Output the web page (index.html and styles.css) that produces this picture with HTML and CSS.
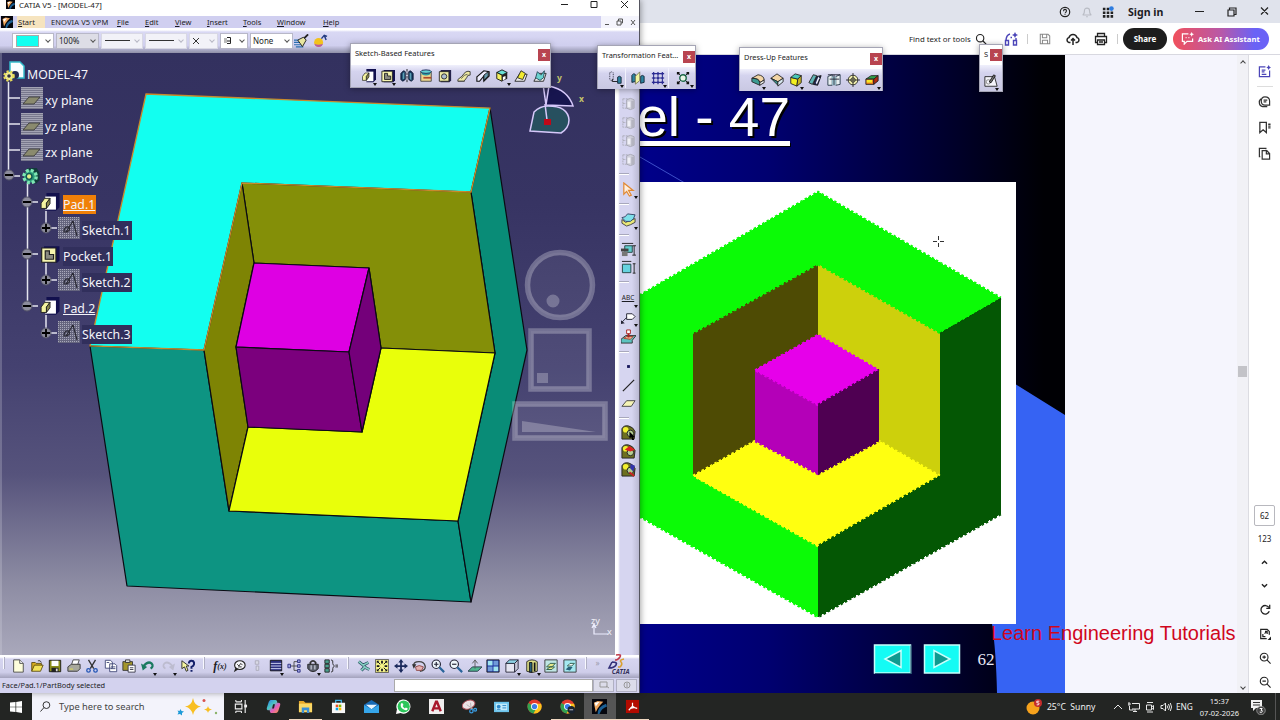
FILE: index.html
```html
<!DOCTYPE html>
<html lang="en">
<head>
    <meta charset="UTF-8">
    <meta name="viewport" content="width=device-width, initial-scale=1.0">
    <title>CATIA V5 - [MODEL-47]</title>
    <link rel="stylesheet" href="styles.css">
</head>
<body>
    <!-- icon set -->
    <svg class="defs" width="0" height="0">
        <defs>
            <linearGradient id="slideBg"><stop offset="0" stop-color="#00008a"/><stop offset=".3" stop-color="#000070"/><stop offset=".75" stop-color="#000028"/><stop offset=".95" stop-color="#000004"/></linearGradient>
            <linearGradient id="cop" x2="1" y2="1"><stop offset="0" stop-color="#2a7bf0"/><stop offset=".4" stop-color="#4cc9c0"/><stop offset=".6" stop-color="#e25bc0"/><stop offset="1" stop-color="#f7a03c"/></linearGradient>
        </defs>
        <symbol id="catia" viewBox="0 0 16 16"><path fill="#05050c" d="M0 0h16v16H0z"/><path fill="#1b5f94" d="M6 16Q6 8 15 5l1 3q-6 2-8 8z"/><path fill="#f0a860" d="M2 4l4-2 6 1-3 3-3 4-2 4-1-5z"/><path fill="#fff" d="M3 4l5-1-4 5z"/></symbol>
        <symbol id="pad" viewBox="0 0 16 16"><path fill="#12104e" d="M5 0h11v12l-3 3H5z"/><path fill="#fff" d="M4 3h9v11H4z"/><path fill="#f4f3a0" stroke="#222" stroke-width=".8" d="M.5 8.500l3-4H8l-3 4V13H.5z"/><path fill="#8a894a" stroke="#222" stroke-width=".8" d="M5 8.500l3-4V9l-3 4z"/></symbol>
        <symbol id="pocket" viewBox="0 0 16 16"><path fill="#12104e" d="M3 1h13v12l-2 2H3z"/><path fill="#f6f5ae" stroke="#222" d="M1 2.500h12v12H1z"/><path fill="#8a8a80" stroke="#222" d="M4 5h3.500v3H11v4H4z"/></symbol>
        <symbol id="shaft" viewBox="0 0 16 16"><path fill="#14385e" stroke="#0a1530" d="M1 5l3-3 2 1v9l-3 2-2-2zM15 5l-3-3-2 1v9l3 2 2-2z"/><path fill="#5ca0b5" d="M3 5l2-2v8l-2 1zM11 4l2 1v8l-2-2z"/><path stroke="#111" d="M8 0v16" stroke-dasharray="3 1"/></symbol>
        <symbol id="groove" viewBox="0 0 16 16"><path fill="#efd68d" stroke="#444" d="M2 3h12v11H2z"/><path fill="#2a9aa0" d="M3 3q5 4 10 0v3q-5 3-10 0z"/><path fill="#b04a2c" d="M5 9h9v2H5z"/><ellipse cx="8" cy="3" rx="6" ry="2" fill="#64d2d2" stroke="#125"/></symbol>
        <symbol id="hole" viewBox="0 0 16 16"><path fill="#25234a" d="M3 1h12v12l-2 2H3z"/><path fill="#eeeca4" stroke="#222" d="M1.500 3h11v11h-11z"/><circle cx="7" cy="8.500" r="3" fill="#aebfd0" stroke="#222"/></symbol>
        <symbol id="rib" viewBox="0 0 16 16"><path fill="#eee9a2" stroke="#333" d="M1 12l5-4q4-7 9-5v4q-3-1-4 3l-3 4H1z"/><path fill="none" stroke="#555" d="M5 11q3-5 7-5M1 14h8"/></symbol>
        <symbol id="slot" viewBox="0 0 16 16"><path fill="#eef" stroke="#111" stroke-width="1.300" d="M1 9l8-7 6 1v5l-6 6V8L4 14H1z"/><path fill="#69a" stroke="#111" d="M9 7l5-4v5l-5 5z"/></symbol>
        <symbol id="stiff" viewBox="0 0 16 16"><path fill="#69e0d5" stroke="#111" d="M2 4l6-3 6 3-6 3z"/><path fill="#f4f060" stroke="#111" d="M2 4l6 3v7l-6-3z"/><path fill="#222" d="M14 4v7l-6 3V7z"/><path fill="#fff" d="M9 9l3-1v3l-3 2z"/></symbol>
        <symbol id="loft" viewBox="0 0 16 16"><path fill="#eee" stroke="#222" d="M1 14l5-8h9l-3 8z"/><path fill="#f2ea30" stroke="#222" d="M4 10l4-8 5 3-3 7z"/></symbol>
        <symbol id="loft2" viewBox="0 0 16 16"><path fill="#eee" stroke="#222" d="M1 14l5-9h9l-3 9z"/><path fill="#6bd3d0" stroke="#245" d="M3 10l2-7 4 4 4-5-1 8-4 3z"/></symbol>
        <symbol id="trans" viewBox="0 0 16 16"><path fill="none" stroke="#223" stroke-dasharray="1 1" d="M2 2l2-1 2 1v8l-2 1-2-1z"/><path fill="none" stroke="#111" d="M5 12h6M5 12V9"/><path fill="#2d83a0" stroke="#123" d="M11 7l2-1 2 1v7h-4z"/></symbol>
        <symbol id="mirror" viewBox="0 0 16 16"><path fill="#2d83a0" stroke="#123" d="M1 5l2-2 2 1v8l-4 1zM11 6l2-1 2 1v7l-4 1z"/><path fill="#f0f5a0" stroke="#775" d="M5 6l5-5v10l-5 4z"/></symbol>
        <symbol id="pattern" viewBox="0 0 16 16"><path stroke="#2b2b92" stroke-width="1.200" d="M1 3h14M1 8h14M1 13h14M3 1v14M8 1v14M13 1v14"/><path fill="#2b2b92" d="M2 2h2v2H2zM7 2h2v2H7zM12 2h2v2h-2zM2 7h2v2H2zM7 7h2v2H7zM12 7h2v2h-2zM2 12h2v2H2zM7 12h2v2H7zM12 12h2v2h-2z"/></symbol>
        <symbol id="scale" viewBox="0 0 16 16"><circle cx="8" cy="8" r="3.700" fill="#eaf4e6" stroke="#1c6a4a" stroke-width="1.600"/><path fill="#111" d="M1 1h3v3H1zM12 1h3v3h-3zM1 12h3v3H1zM12 12h3v3h-3z"/><path stroke="#111" d="M3 3l2 2M13 3l-2 2M3 13l2-2M13 13l-2-2"/></symbol>
        <symbol id="fillet" viewBox="0 0 16 16"><path fill="#f2d5a6" stroke="#222" d="M1 6l7-4q7 1 7 6l-5 3q0-5-9-5z"/><path fill="#3c9b92" stroke="#222" d="M1 6q8 0 9 5v3L1 10z"/><path fill="#eee" stroke="#222" d="M10 11l5-3v3l-5 3z"/></symbol>
        <symbol id="chamfer" viewBox="0 0 16 16"><path fill="#f2d5a6" stroke="#222" d="M1 6l7-5 7 5-6 4z"/><path fill="#3c9b92" stroke="#222" d="M1 6l8 8V10z"/><path fill="#d8e8f0" stroke="#222" d="M9 10l6-4v4l-6 5z"/></symbol>
        <symbol id="draft" viewBox="0 0 16 16"><path fill="#f2ef20" stroke="#222" d="M2 5l8 2-1 8-7-3z"/><path fill="#49c8b8" stroke="#222" d="M2 5l5-4 7 2-4 4z"/><path fill="#c8b420" stroke="#222" d="M10 7l4-4v8l-5 4z"/></symbol>
        <symbol id="shell" viewBox="0 0 16 16"><path fill="#5fb3b5" stroke="#222" d="M1 11l5-9 4 1-5 10z"/><path fill="#222a55" stroke="#111" d="M6 13l4-9 5-1-4 11z"/><path fill="#f2f2ff" d="M9 11l3-7 1 2-3 7z"/></symbol>
        <symbol id="thick" viewBox="0 0 16 16"><path fill="#e8f0f2" stroke="#234" d="M1 4l5-2v12H1zM10 4l5-2v11l-5 1z"/><path fill="#a9d3dc" d="M6 4h4v10H6z"/><path stroke="#223" d="M1 2h14M3 7h11M8 2v12" fill="none"/></symbol>
        <symbol id="thread" viewBox="0 0 16 16"><circle cx="8" cy="8" r="5.500" fill="#f7f5b0" stroke="#222"/><circle cx="8" cy="8" r="2.500" fill="none" stroke="#222"/><path stroke="#222" d="M0 8h16M8 0v16"/></symbol>
        <symbol id="remove" viewBox="0 0 16 16"><path fill="#2fa04b" stroke="#222" d="M1 7l6-4h8l-5 4z"/><path fill="#f08020" stroke="#222" d="M1 7h9v6H1z"/><path fill="#f4e828" d="M2 8h6v3H2z"/><path fill="#b02a10" stroke="#222" d="M10 7l5-4v6l-5 4z"/></symbol>
        <symbol id="sketcher" viewBox="0 0 16 16"><path fill="#f4f4fa" stroke="#222" d="M1 3h11l3 11H1z"/><circle cx="5" cy="9" r="2.500" fill="none" stroke="#888"/><path fill="#777" stroke="#111" d="M6 9l5-8 2 1-5 8z"/></symbol>
        <symbol id="new" viewBox="0 0 16 16"><path fill="#fdfddc" stroke="#444" d="M3 1h7l4 4v10H3z"/><path fill="#fff" stroke="#444" d="M10 1v4h4"/></symbol>
        <symbol id="open" viewBox="0 0 16 16"><path fill="#d8ac1f" stroke="#5a4a10" d="M2 14V4h4l1 1h6v3"/><path fill="#f3e25a" stroke="#5a4a10" d="M2 14l3-7h10l-3 7z"/><path fill="none" stroke="#333" d="M9 2q3-1 4 2"/></symbol>
        <symbol id="save" viewBox="0 0 16 16"><path fill="#8c8f1c" stroke="#111" d="M1.500 1.500h13v13h-13z"/><path fill="#fff" d="M4 2h8v6H4z"/><path fill="#222" d="M4 10h8v5H4z"/><path fill="#ddd" d="M9 11h2v3H9z"/></symbol>
        <symbol id="print" viewBox="0 0 16 16"><path fill="#fff" stroke="#444" d="M5 7l2-6h7l-2 6z"/><path fill="#a8a89c" stroke="#333" d="M1 9l4-3h10v5l-3 3H1z"/><path fill="#e7e44a" d="M3 11h4v1H3z"/></symbol>
        <symbol id="cut" viewBox="0 0 16 16"><path stroke="#333" stroke-width="1.500" d="M4 1l6 10M12 1L6 11"/><circle cx="4" cy="13" r="2" fill="none" stroke="#2456b5" stroke-width="1.500"/><circle cx="12" cy="13" r="2" fill="none" stroke="#2456b5" stroke-width="1.500"/></symbol>
        <symbol id="copy" viewBox="0 0 16 16"><path fill="#fff" stroke="#3b4474" d="M1.500 1.500h6l2 2v7h-8zM6.500 5.500h6l2 2v7h-8z"/><path stroke="#3b4474" d="M8 9h5M8 11h5M3 4h3"/></symbol>
        <symbol id="paste" viewBox="0 0 16 16"><path fill="#a4962c" stroke="#333" d="M1 3h11v10H1z"/><path fill="#ddd" stroke="#333" d="M4 1h5v3H4z"/><path fill="#fff" stroke="#334" d="M7 7h8v8H7z"/><path stroke="#334" d="M9 10h4M9 12h4"/></symbol>
        <symbol id="undo" viewBox="0 0 16 16"><path fill="none" stroke="#1b7a60" stroke-width="2.500" d="M3 8q5-6 9-3 3 3-1 6"/><path fill="#1b7a60" d="M0 5l2 8 5-4z"/></symbol>
        <symbol id="redo" viewBox="0 0 16 16"><path fill="none" stroke="#bdbccf" stroke-width="2" d="M13 8Q8 2 4 5q-3 3 1 6"/><path fill="#bdbccf" d="M16 5l-2 8-5-4z"/></symbol>
        <symbol id="whats" viewBox="0 0 16 16"><path fill="#f5f5a0" stroke="#222" d="M1 2l8 6H6l2 5-2 1-2-5-3 2z"/><path fill="none" stroke="#14206a" stroke-width="2.300" d="M9 5q0-3 3-3t3 3-3 4v2M12 12.500v2"/></symbol>
        <symbol id="chat" viewBox="0 0 16 16"><ellipse cx="9" cy="7" rx="6" ry="5" fill="#f6f6fa" stroke="#222" stroke-width="1.300"/><path fill="#222" d="M4 10l-2 5 5-3z"/><path fill="none" stroke="#222" d="M6 6l2 2 2-3 2 2M7 9h4"/></symbol>
        <symbol id="ghost" viewBox="0 0 16 16"><path fill="#d9d9e6" stroke="#aaa9b8" d="M6 2h4v4H6zM7 8h3v5H7z"/></symbol>
        <symbol id="table" viewBox="0 0 16 16"><path fill="#2b2f80" stroke="#111" d="M1.500 1.500h13v12h-13z"/><path stroke="#dfe2ff" d="M2 5h12M2 8h12M2 11h12"/></symbol>
        <symbol id="graph" viewBox="0 0 16 16"><path fill="none" stroke="#444" d="M4 8h4M8 3v10M8 3h4M8 8h4M8 13h4"/><path fill="#9fa3e0" stroke="#2b2f80" d="M1 6h3v4H1zM12 1h3v3h-3zM12 6.500h3v3h-3zM12 12h3v3h-3z"/></symbol>
        <symbol id="lock" viewBox="0 0 16 16"><path fill="none" stroke="#333" stroke-width="2" d="M5 7V4q3-4 6 0v3"/><path fill="#575c68" stroke="#222" d="M2 6h12v5q-6 7-12 0z"/><path fill="#aeb2bd" d="M5 7h2v5H5zM9 7h2v5H9z"/></symbol>
        <symbol id="equiv" viewBox="0 0 16 16"><path fill="#49a08d" stroke="#222" d="M1 1h5v4H1zM1 6h5v4H1zM1 11h5v4H1z"/><path fill="none" stroke="#222" d="M8 1q3 0 2 4 0 2 2 3-2 1-2 3 1 4-2 4M13 7h3M13 9h3"/></symbol>
        <symbol id="fly" viewBox="0 0 16 16"><path fill="none" stroke="#2a4f60" stroke-width="3.500" stroke-linejoin="round" d="M2 3l5 4 6-3M7 7l3 3 4 2M9 9l-4 4"/><path fill="none" stroke="#86cfc2" stroke-width="1.800" stroke-linejoin="round" d="M2 3l5 4 6-3M7 7l3 3 4 2M9 9l-4 4"/></symbol>
        <symbol id="fit" viewBox="0 0 16 16"><path fill="#f4f286" stroke="#555" d="M.5.500h15v15H.5z"/><path stroke="#14141e" stroke-width="1.100" d="M3 3l3 3M13 3l-3 3M3 13l3-3M13 13l-3-3"/><path fill="#14141e" d="M2 2h3L2 5zM14 2h-3l3 3zM2 14h3l-3-3zM14 14h-3l3-3zM7 2h2v3H7zM7 11h2v3H7zM2 7h3v2H2zM11 7h3v2h-3z"/></symbol>
        <symbol id="pan" viewBox="0 0 16 16"><path fill="#1b2a5c" d="M8 0l3 4H9v3h3V5l4 3-4 3V9H9v3h2l-3 4-3-4h2V9H4v2L0 8l4-3v2h3V4H5z"/></symbol>
        <symbol id="rotate" viewBox="0 0 16 16"><path fill="none" stroke="#444" stroke-width="1.500" d="M2 7q0-4 6-4t7 5-6 6"/><path fill="#e6b0b0" stroke="#844" d="M4 9q4-3 9 0l-2 4H5z"/><path fill="#333" d="M0 6h5l-3 5z"/></symbol>
        <symbol id="zin" viewBox="0 0 16 16"><circle cx="6" cy="6" r="4.800" fill="#eef6fb" stroke="#223" stroke-width="1.300"/><path stroke="#223" stroke-width="1.300" d="M3.500 6h5M6 3.500v5"/><path stroke="#28649a" stroke-width="2.500" d="M9.500 9.500L15 15"/></symbol>
        <symbol id="zout" viewBox="0 0 16 16"><circle cx="6" cy="6" r="4.800" fill="#eef6fb" stroke="#223" stroke-width="1.300"/><path stroke="#223" stroke-width="1.300" d="M3.500 6h5"/><path stroke="#28649a" stroke-width="2.500" d="M9.500 9.500L15 15"/></symbol>
        <symbol id="normal" viewBox="0 0 16 16"><path fill="#4fb58e" stroke="#234" d="M0 14l5-5h11l-5 5z"/><path fill="none" stroke="#555" d="M8 11V2M5 5l3-4 3 4"/></symbol>
        <symbol id="quad" viewBox="0 0 16 16"><path fill="#1a2f9c" stroke="#222" d="M1 1h14v14H1z"/><path fill="#9fe4f0" d="M2 2h5.500v5.500H2zM8.500 8.500H14V14H8.500z"/><path fill="#6f9ad8" d="M8.500 2H14v5.500H8.500zM2 8.500h5.500V14H2z"/></symbol>
        <symbol id="cube" viewBox="0 0 16 16"><path fill="#e6e6f2" stroke="#223" d="M1 5h10v10H1z"/><path fill="#8fd4e6" stroke="#223" d="M1 5l4-4h10l-4 4z"/><path fill="#c8c8da" stroke="#223" d="M11 5l4-4v10l-4 4z"/></symbol>
        <symbol id="shade" viewBox="0 0 16 16"><path fill="#e0e288" stroke="#222" d="M2 3q6-4 12 0v11q-6 3-12 0z"/><path fill="#27607a" stroke="#111" d="M5 4h3v11H5z"/><path fill="#111" d="M10 4h2v10h-2z"/></symbol>
        <symbol id="hide" viewBox="0 0 16 16"><path fill="#bfe6e4" stroke="#333" d="M1 1h14v14H1z"/><path fill="#e8e88a" stroke="#254" d="M3 9l4-4h6l-4 4zM3 12l4-3h5l-3 3z"/></symbol>
        <symbol id="swap" viewBox="0 0 16 16"><path fill="#a4e8f0" stroke="#333" d="M1 1h14v14H1z"/><path fill="#f6f6f6" stroke="#254" d="M5 8l3-3h5l-3 3z"/><path fill="#27607a" d="M3 12l3-3h5l-3 4z"/></symbol>
        <symbol id="dim" viewBox="0 0 16 16"><path fill="#cfcfda" stroke="#a9a9b6" d="M6 4q4-3 8 0v9q-4 3-8 0z"/><path fill="#b4b4c0" d="M11 5h3v8l-3 1z"/><path fill="#f0f0f6" d="M7 6h3v6H7z"/><path fill="none" stroke="#adadba" stroke-dasharray="2 1" d="M2 3v10h4M2 3h5M2 8h4"/></symbol>
        <symbol id="select" viewBox="0 0 16 16"><path fill="#fff0df" stroke="#e18a35" stroke-width="1.300" d="M3 1v12l3-3 3 5 2-1-3-5h5z"/></symbol>
        <symbol id="layers" viewBox="0 0 16 16"><path fill="#e9e878" stroke="#444" d="M1 8l4 3 10-4v4q-5 3-9 4l-5-3z"/><path fill="#7fe0ea" stroke="#346" d="M1 6q4 0 6-4l8 1q-1 5-5 7H5z"/></symbol>
        <symbol id="dimA" viewBox="0 0 16 16"><path fill="#62cfd0" stroke="#244" d="M4 4h8v7H4z"/><path fill="#444" d="M0 7h8v3H0z"/><path fill="#777" d="M1 10h6v5H1z"/><path stroke="#222" fill="none" d="M1 1.500h12M14 4v10M12 4h4M12 14h4"/></symbol>
        <symbol id="dimB" viewBox="0 0 16 16"><path fill="#66d3e0" stroke="#244" d="M1.500 4.500h9v9h-9z"/><path stroke="#222" fill="none" d="M1 1.500h10M14 4v10M12.500 4h3M12.500 14h3"/></symbol>
        <symbol id="flag" viewBox="0 0 16 16"><path fill="#fff" stroke="#223" d="M6 4h6l3 3-3 3H6z"/><path stroke="#223" d="M6 8l-5 5"/><path fill="#223" d="M0 11l4 3-4 1z"/></symbol>
        <symbol id="stamp" viewBox="0 0 16 16"><path fill="#5cc3c0" stroke="#333" d="M0 11l5-4h11l-4 5v3H0z"/><path fill="#f2b090" stroke="#a43" d="M3 10l3-2h7l-3 3z"/><path fill="#fff" stroke="#a22" d="M6 1h4v4H6z"/><path stroke="#a22" stroke-width="2" d="M8 5v4"/></symbol>
        <symbol id="dot" viewBox="0 0 16 16"><path fill="#14145a" d="M6.500 6.500h3v3h-3z"/></symbol>
        <symbol id="line" viewBox="0 0 16 16"><path stroke="#222" stroke-width="1.300" d="M2 14L14 2"/></symbol>
        <symbol id="plane" viewBox="0 0 16 16"><path fill="#f4f3b5" stroke="#444" d="M1 11l5-6h9l-4 6z"/></symbol>
        <symbol id="mat" viewBox="0 0 16 16"><path fill="#6d7020" stroke="#222" d="M1 4q2-4 7-3t7 6l-1 8H1z"/><circle cx="5" cy="5" r="3" fill="#f2ef30"/><circle cx="10" cy="9" r="3.500" fill="#b6cf90" stroke="#222"/></symbol>
        <symbol id="gear" viewBox="0 0 20 20"><path fill="#123a3a" d="M6 1h10l3 5v8l-4 4z"/><circle cx="9" cy="10" r="6.500" fill="#2c9a78" stroke="#7fe8b4" stroke-width="3.500" stroke-dasharray="3 2.100"/><circle cx="8" cy="10" r="3" fill="#dff08a" stroke="#155" stroke-width="1.500"/></symbol>
        <symbol id="hatch" viewBox="0 0 22 22"><path fill="#77778c" d="M0 0h22v22H0z"/><path stroke="#a3a3b3" d="M0 .5h22M0 2.500h22M0 4.500h22M0 6.500h22M0 8.500h22M0 10.500h22M0 12.500h22M0 14.500h22M0 16.500h22M0 18.500h22M0 20.500h22"/><path fill="#8a8a6e" stroke="#444" d="M2 17l6-7h11l-6 7z"/></symbol>
        <symbol id="sk" viewBox="0 0 22 22"><path fill="#65657e" d="M0 0h22v22H0z"/><path stroke="#a9a9bb" stroke-dasharray="1 1" d="M0 .5h22M0 2.500h22M0 4.500h22M0 6.500h22M0 8.500h22M0 10.500h22M0 12.500h22M0 14.500h22M0 16.500h22M0 18.500h22M0 20.500h22"/><path fill="none" stroke="#2a2a34" stroke-width="1.200" d="M15 4l4 15M8 15l7-11M6 15q0-6 5-5 2 3-2 5z"/></symbol>
        <symbol id="chrome" viewBox="0 0 16 16"><circle cx="8" cy="8" r="7.500" fill="#e33b2e"/><path fill="#32a350" d="M1.500 4.200A7.500 7.500 0 0 0 7 15.400L11 9 8 8z"/><path fill="#fbc51c" d="M15 5a7.500 7.500 0 0 1-8 10.400L11 8 8 5z"/><circle cx="8" cy="8" r="3.700" fill="#fff"/><circle cx="8" cy="8" r="2.800" fill="#3b7de8"/></symbol>
    </svg>

    <main class="desktop">
        <section class="catia">
            <div class="titlebar">
                <svg class="app"><use href="#catia"/></svg>
                <span class="title">CATIA V5 - [MODEL-47]</span>
                <svg class="winbtns" viewBox="0 0 80 12"><path d="M5 4.500h7M35 1.500h6v6h-6zM65 1l7 7M72 1l-7 7"/></svg>
            </div>
            <div class="menubar">
                <svg class="menuicon"><use href="#catia"/></svg>
                <nav class="menu">
                    <span class="start"><u>S</u>tart</span><span class="vpm">ENOVIA V5 VPM</span><span><u>F</u>ile</span><span><u>E</u>dit</span><span><u>V</u>iew</span><span><u>I</u>nsert</span><span><u>T</u>ools</span><span><u>W</u>indow</span><span><u>H</u>elp</span>
                </nav>
                <svg class="mdi" viewBox="0 0 38 12"><path d="M4 8.500h4M16 5h4v4h-4zM17.500 5V3h4v4H20M30 4l4 5M34 4l-4 5"/></svg>
            </div>
            <div class="props">
                <div class="combo w42"><i class="swatch"></i><b></b></div>
                <div class="combo w43 grey">100%<b></b></div>
                <div class="combo w42 off"><i class="rule"></i><b></b></div>
                <div class="combo w42 off"><i class="rule"></i><b></b></div>
                <div class="combo w29 off"><svg width="8" height="8" viewBox="0 0 8 8"><path stroke="#333" d="M1 1l6 6M7 1L1 7"/></svg><b></b></div>
                <div class="combo w28"><svg width="9" height="9" viewBox="0 0 9 9"><path fill="#bbb" d="M1 2h3v5H1z"/><path fill="none" stroke="#222" d="M4 1.500h3.500v6H4M4 5h3"/></svg><b></b></div>
                <div class="combo w43">None<b></b></div>
                <svg class="brush" viewBox="0 0 16 14"><path stroke="#2a6fb0" stroke-width="1.200" d="M0 6h8M0 8.500h9M0 11h9M2 13.300h8"/><path fill="#e8e6a0" stroke="#222" d="M4 6l6-3 3 3-4 7z"/><path stroke="#222" stroke-width="2" d="M11 4l4-4"/></svg>
                <svg class="brush ball" viewBox="0 0 16 14"><circle cx="6" cy="8.500" r="4.800" fill="#f2c21c"/><path fill="#b85aa0" d="M1.500 10q4 2 9 0-1 3.500-4.500 3.500T1.500 10z"/><path fill="none" stroke="#223a80" stroke-width="1.500" d="M9 4.500L12 1l3 1M12 1l2 5"/></svg>
            </div>
            <div class="work">
                <div class="viewport">
                    <svg class="scene" viewBox="0 53 615 602">
                        <!-- solid -->
                        <g stroke="#0a0a12" stroke-width="1.200" stroke-linejoin="round">
                            <path fill="#12fff0" stroke="none" d="M146 94L490 108 471 192 242 183 204 350 90 346z"/>
                            <path fill="#0d9482" d="M90 346L204 350 229 511 458 521 471 602 127 586z"/>
                            <path fill="#098c77" d="M490 108L527 350 471 602 458 521 495 353 471 192z"/>
                            <path fill="#848f08" d="M242 183L471 192 495 353 381 348 369 268 254 263z"/>
                            <path fill="#7e8404" d="M242 183L254 263 236 347 248 427 229 511 204 350z"/>
                            <path fill="#e9ff0a" d="M381 348L495 353 458 521 229 511 248 427 362 432z"/>
                            <path fill="#de00e3" d="M254 263L369 268 349 352 236 347z"/>
                            <path fill="#7b007d" d="M236 347L349 352 362 432 248 427z"/>
                            <path fill="#74007a" d="M369 268L381 348 362 432 349 352z"/>
                        </g>
                        <path fill="none" stroke="#c88a2c" stroke-width="1.300" d="M146 94L490 108 471 192 242 183 204 350 90 346z"/>
                        <!-- tree lines -->
                        <path fill="none" stroke="#dcdce8" stroke-width="1.400" d="M1 53v602" opacity=".35"/>
                        <path fill="none" stroke="#e4e4ee" stroke-width="1.500" d="M8.500 82v94M9 98h11M9 124h11M9 150h11M9 176h11M27.500 184v122M27 202h11M27 254h11M27 306h11M46 211v17h11M46 262v18h11M46 315v18h11"/>
                        <g fill="#8c8c9c" stroke="#55556a"><circle cx="9" cy="175" r="5"/><circle cx="27" cy="202" r="5"/><circle cx="27" cy="254" r="5"/><circle cx="27" cy="306" r="5"/><circle cx="46" cy="228" r="5"/><circle cx="46" cy="280" r="5"/><circle cx="46" cy="333" r="5"/></g>
                        <path stroke="#000" stroke-width="1.800" d="M5 175h8M23 202h8M23 254h8M23 306h8M42 228h8M46 224v8M42 280h8M46 276v8M42 333h8M46 329v8"/>
                        <!-- compass -->
                        <g stroke="#d6c8fa" stroke-width="1.500">
                            <path fill="#17154f" d="M546 105L543 84M546 105L549 86Q568 90 573 106z"/>
                            <path fill="#27505f" d="M530 131l4-19q6-6 14-6 20 0 21 14 0 8-8 13z"/>
                            <path d="M545 104l2 16"/>
                        </g>
                        <path fill="#c00818" d="M544 119h7v6h-7z"/>
                        <g class="axis"><text x="557" y="81">y</text><text x="579" y="102">x</text></g>
                        <!-- navigation widgets -->
                        <g fill="#fff" fill-opacity=".06" stroke="#fff" stroke-opacity=".27" stroke-width="5.500">
                            <circle cx="560" cy="285" r="32.500"/><path d="M531 331h58v58h-58zM515 404h90v34h-90z"/>
                        </g>
                        <path fill="#fff" fill-opacity=".25" d="M546.500 301a6.500 6.500 0 1 0 13 0 6.500 6.500 0 1 0-13 0zM537 373h11v10h-11zM522 421l74 11h-74z"/>
                        <path fill="none" stroke="#eef" stroke-width="1.200" d="M594 625v9h14M592 628l2-4 2 4"/>
                        <g class="triad"><text x="591" y="624">zy</text><text x="607" y="635">x</text></g>
                    </svg>
                    <ul class="tree">
                        <li class="root"><svg class="i22" viewBox="0 0 22 22"><path fill="#f8fdff" stroke="#3bc" stroke-width="1.500" d="M7 1h10l4 4v12H7z"/><circle cx="12" cy="14" r="4" fill="#222a50"/><circle cx="6" cy="15" r="4.300" fill="#f3efa0" stroke="#e6dc5a" stroke-width="3" stroke-dasharray="2 1.500"/><circle cx="6" cy="15" r="1.800" fill="#334"/></svg><span>MODEL-47</span></li>
                        <li class="l1"><svg class="i22"><use href="#hatch"/></svg><span>xy plane</span></li>
                        <li class="l1"><svg class="i22"><use href="#hatch"/></svg><span>yz plane</span></li>
                        <li class="l1"><svg class="i22"><use href="#hatch"/></svg><span>zx plane</span></li>
                        <li class="l1"><svg class="i20"><use href="#gear"/></svg><span>PartBody</span></li>
                        <li class="l2"><svg class="i20"><use href="#pad"/></svg><span class="hot">Pad.1</span></li>
                        <li class="l3"><svg class="i22"><use href="#sk"/></svg><span class="bg">Sketch.1</span></li>
                        <li class="l2"><svg class="i20"><use href="#pocket"/></svg><span class="bg">Pocket.1</span></li>
                        <li class="l3"><svg class="i22"><use href="#sk"/></svg><span class="bg">Sketch.2</span></li>
                        <li class="l2"><svg class="i20"><use href="#pad"/></svg><span class="ul">Pad.2</span></li>
                        <li class="l3"><svg class="i22"><use href="#sk"/></svg><span class="bg">Sketch.3</span></li>
                    </ul>
                </div>
                <div class="vbar">
                    <div class="vi"><svg><use href="#dim"/></svg></div>
                    <div class="vi"><svg><use href="#dim"/></svg></div>
                    <div class="vi"><svg><use href="#dim"/></svg></div>
                    <div class="vi"><svg><use href="#dim"/></svg></div>
                    <hr>
                    <div class="vi tall more"><svg><use href="#select"/></svg></div>
                    <hr>
                    <div class="vi tall more"><svg><use href="#layers"/></svg></div>
                    <hr>
                    <div class="vi"><svg><use href="#dimA"/></svg></div>
                    <div class="vi"><svg><use href="#dimB"/></svg></div>
                    <hr>
                    <div class="vi tall more abc">ABC</div>
                    <div class="vi more"><svg><use href="#flag"/></svg></div>
                    <div class="vi tall"><svg><use href="#stamp"/></svg></div>
                    <hr>
                    <div class="vi"><svg><use href="#dot"/></svg></div>
                    <div class="vi"><svg><use href="#line"/></svg></div>
                    <div class="vi"><svg><use href="#plane"/></svg></div>
                    <hr>
                    <div class="vi"><svg viewBox="0 0 16 16"><use href="#mat"/><path d="M9 7l6 6-2 0 1 3-2 0-1-3-2 1z"/></svg></div>
                    <div class="vi"><svg viewBox="0 0 16 16"><use href="#mat"/><path fill="#d22" d="M4 6l5-4 6 4-5 2z"/></svg></div>
                    <div class="vi"><svg viewBox="0 0 16 16"><use href="#mat"/><path fill="#33a" d="M10 2l5 2-2 6-3-3z"/><path stroke="#c22" stroke-width="2" d="M9 11l5 4"/></svg></div>
                </div>
            </div>
            <div class="hbar">
                <div class="grip first"></div>
                <div class="hi"><svg><use href="#new"/></svg></div>
                <div class="hi"><svg><use href="#open"/></svg></div>
                <div class="hi"><svg><use href="#save"/></svg></div>
                <div class="hi"><svg><use href="#print"/></svg></div>
                <div class="hi"><svg><use href="#cut"/></svg></div>
                <div class="hi"><svg><use href="#copy"/></svg></div>
                <div class="hi"><svg><use href="#paste"/></svg></div>
                <div class="hi wide more"><svg><use href="#undo"/></svg></div>
                <div class="hi wide more"><svg><use href="#redo"/></svg></div>
                <div class="hi"><svg><use href="#whats"/></svg></div>
                <div class="grip mid"></div>
                <div class="hi fx">f<small>(x)</small></div>
                <div class="hi"><svg><use href="#chat"/></svg></div>
                <div class="hi"><svg><use href="#ghost"/></svg></div>
                <div class="hi more"><svg><use href="#table"/></svg></div>
                <div class="hi"><svg><use href="#graph"/></svg></div>
                <div class="hi more"><svg><use href="#lock"/></svg></div>
                <div class="hi"><svg><use href="#equiv"/></svg></div>
                <div class="grip wide"></div>
                <div class="hi"><svg><use href="#fly"/></svg></div>
                <div class="hi"><svg><use href="#fit"/></svg></div>
                <div class="hi"><svg><use href="#pan"/></svg></div>
                <div class="hi"><svg><use href="#rotate"/></svg></div>
                <div class="hi"><svg><use href="#zin"/></svg></div>
                <div class="hi"><svg><use href="#zout"/></svg></div>
                <div class="hi"><svg><use href="#normal"/></svg></div>
                <div class="hi"><svg><use href="#quad"/></svg></div>
                <div class="hi wide more"><svg><use href="#cube"/></svg></div>
                <div class="hi wide more"><svg><use href="#shade"/></svg></div>
                <div class="hi"><svg><use href="#hide"/></svg></div>
                <div class="hi"><svg><use href="#swap"/></svg></div>
                <div class="grip last"></div>
                <span class="chev">»</span>
                <div class="ds"><svg viewBox="0 0 28 15"><path fill="none" stroke="#c03a4a" stroke-width="1.500" d="M9 1q6-1 4 2t-5 3"/><path fill="none" stroke="#33307a" stroke-width="1.600" d="M5 8q6 0 4 3t-7 3l3-6"/><path fill="none" stroke="#d9a030" stroke-width="1.600" d="M17 5q-5 1-3 3t-1 5l-2 0"/></svg><em>CATIA</em></div>
            </div>
            <div class="status">
                <span>Face/Pad.1/PartBody selected</span>
                <div class="cmd"></div>
                <div class="sbtn"><svg viewBox="0 0 12 8"><path fill="none" stroke="#999" d="M2 1h7v5H2zM8 5l3 2"/></svg></div>
                <div class="sbtn"><svg viewBox="0 0 12 8"><circle cx="6" cy="4" r="3" fill="none" stroke="#999"/><path stroke="#999" d="M6 2v4"/></svg></div>
            </div>
        </section>

        <section class="acrobat">
            <div class="atitle">
                <svg class="a12" viewBox="0 0 14 14"><circle cx="7" cy="7" r="5.500" fill="none" stroke="#222" stroke-width="1.400"/><path fill="none" stroke="#222" stroke-width="1.300" d="M5.300 6q0-2 1.700-2t1.700 1.500T7 8M7 9v1.300"/></svg>
                <svg class="a12 bell" viewBox="0 0 14 14"><path fill="none" stroke="#b9bcc4" stroke-width="1.300" d="M2 10.500q2-1 2-5 0-3 3-3t3 3q0 4 2 5zM6 12.500h2"/></svg>
                <svg class="a12" viewBox="0 0 14 14"><path fill="#222" d="M1 2h3v3H1zM5.500 2h3v3h-3zM1 6.300h3v3H1zM5.500 6.300h3v3h-3zM10 6.300h3v3h-3zM1 10.600h3v3H1zM5.500 10.600h3v3h-3zM10 10.600h3v3h-3z"/><circle cx="11" cy="3" r="2.700" fill="#2f7de0"/></svg>
                <b class="signin">Sign in</b>
                <svg class="awin" viewBox="0 0 78 12"><path d="M1 5.500h9M34 4h6v6h-6zM35.500 4V2h6.500v6.500h-2M67 1.500l7 7M74 1.500l-7 7"/></svg>
            </div>
            <div class="atools">
                <span class="find">Find text or tools</span>
                <svg class="a12 mag" viewBox="0 0 14 14"><circle cx="6" cy="6" r="4.300" fill="none" stroke="#222" stroke-width="1.300"/><path stroke="#222" stroke-width="1.400" d="M9 9l4 4"/></svg>
                <svg class="a14 phones" viewBox="0 0 14 14"><path fill="none" stroke="#4b45b8" stroke-width="1.400" d="M2 9q0-6 4-7M12 8V6M1.500 8.500h3V13h-3zM9.500 8.500h3V13h-3zM6.500 5.500h1.500"/><path fill="#4b45b8" d="M11 0l1 2 2 1-2 1-1 2-1-2-2-1 2-1z"/></svg>
                <i class="vline"></i>
                <svg class="a12 disk" viewBox="0 0 14 14"><path fill="none" stroke="#888" stroke-width="1.200" d="M1.500 1.500h9l2 2v9h-11zM4 1.500v4h5v-4M4 12.500v-4h6v4"/></svg>
                <svg class="a14 up" viewBox="0 0 14 14"><path fill="none" stroke="#222" stroke-width="1.500" d="M4.500 10.500H3q-2-.5-2-2.500t2-2.500Q4 2.500 7 2.500t4 3q2 .5 2 2.500t-2 2.500H9.500M7 13V6.500M5 8.500l2-2 2 2"/></svg>
                <svg class="a14" viewBox="0 0 14 14"><path fill="none" stroke="#222" stroke-width="1.300" d="M3.500 4.500v-3h7v3M3.500 10.500h-2v-6h11v6h-2M3.500 8h7v4.500h-7zM5 10h4"/></svg>
                <i class="vline last"></i>
                <span class="share">Share</span>
                <span class="ask"><svg viewBox="0 0 14 14"><path fill="none" stroke="#fff" stroke-width="1.300" d="M8 2H1.500v8h2v3l3-3h6V7M5 6h1M8 6h1"/><path fill="#fff" d="M11.500 0l.8 1.700 1.700.8-1.700.8-.8 1.700-.8-1.700L9 2.500l1.700-.8z"/></svg>Ask AI Assistant</span>
            </div>
            <div class="abody">
                <svg class="slide" viewBox="640 55 425 638" width="425" height="638">
                    <path fill="url(#slideBg)" d="M640 55h425v638H640z"/>
                    <path stroke="#3d4fc8" d="M640 157l50 29"/>
                    <path fill="#3663f3" d="M985 365L1016 384.500 1065 415V693H997Q996 650 992 624V400z"/>
                    <g class="heading"><text x="790" y="136" text-anchor="end">el - 47</text><path fill="#000" d="M640 143h151v4H640z"/><path fill="#fff" d="M640 141h150v5H640z"/></g>
                    <path fill="#fff" d="M640 182h376v442H640z"/>
                    <!-- isometric block -->
                    <g shape-rendering="crispEdges">
                        <path fill="#0bfb06" d="M818 192L1001 298 940 333 818 264 693 333 693 476 818 546V617L635 514V298z"/>
                        <path fill="#045704" d="M1001 298V514L818 617V546L940 476V333z"/>
                        <path fill="#4e4b04" d="M818 264V335L755 370V441L693 476V333z"/>
                        <path fill="#cdd00c" d="M818 264V335L879 370V441L940 476V333z"/>
                        <path fill="#ffff10" d="M693 476L755 441 818 474 879 441 940 476 818 546z"/>
                        <path fill="#e600ea" d="M818 335L879 370 818 405 755 370z"/>
                        <path fill="#b400b8" d="M755 370L818 405V474L755 441z"/>
                        <path fill="#4f0052" d="M879 370L818 405V474L879 441z"/>
                    </g>
                    <!-- stepped bitmap edges -->
                    <g fill="none" stroke-width="1.600" stroke-dasharray="2.600 2.300">
                        <path stroke="#0bfb06" d="M635 297.500L818 191.500 1001 297.500M635 514.500L818 617.500M818 264.500L693 333.500M818 264.500L940 333.500"/>
                        <path stroke="#045704" d="M1001 514.500L818 617.500M940 333.500L1001 298.500M940 475.500L818 545.500"/>
                        <path stroke="#ffff10" d="M693 475.500L755 440.500M940 475.500L879 440.500M818 546.500L694 476.500"/>
                        <path stroke="#e600ea" d="M755 370L818 334.500 879 370M818 405.500L755 370.500"/>
                        <path stroke="#4f0052" d="M818 404.500L879 369.500M818 474.500L879 441.500"/>
                        <path stroke="#b400b8" d="M755 441.500L818 474.500"/>
                    </g>
                    <path fill="none" stroke="#333" d="M933 241.500h4M940 241.500h4M938.500 236v4M938.500 243v4"/>
                    <g fill="#14fbf4" stroke="#c8fffc" stroke-width="1.500"><path d="M874.500 645h36v28h-36zM924.500 645h35v28h-35z"/><path fill="#0f9a90" d="M901 650.500v17L885 659zM934 650.500v17l16-8.500z"/></g>
                    <path fill="none" stroke="#2a5f78" stroke-width="1.200" d="M875 673.500h36v-28"/>
                    <text class="pageno" x="977.500" y="665">62</text>
                </svg>
                <div class="pane"></div>
                <div class="scroll"><i class="sup"></i><i class="thumb"></i><i class="sdn"></i></div>
                <div class="rail">
                    <svg class="r1" viewBox="0 0 14 14"><path fill="none" stroke="#4b45b8" stroke-width="1.300" d="M8 2H1.500v10.500h11V6M4 5.500h4M4 7.500h3M4 10h5"/><path fill="#4b45b8" d="M11.500 0l1 2 1.500.7-1.500.8-1 2-1-2L9 2.700l1.500-.7z"/></svg>
                    <hr>
                    <svg viewBox="0 0 14 14"><path fill="none" stroke="#333" stroke-width="1.300" d="M7.500 2q5 0 5 4.500V11h-5Q3.500 11 3.500 6.500T7.500 2zM3 4Q1 6 1.500 9T5 12.500h5M6 5.500h4M6 7.500h3"/></svg>
                    <svg viewBox="0 0 14 14"><path fill="none" stroke="#333" stroke-width="1.400" d="M2 1.500h7v11L5.500 9.500 2 12.500zM11 3.500h2.500M11 5.500h2.500M11 7.500h2.500"/></svg>
                    <svg viewBox="0 0 14 14"><path fill="none" stroke="#333" stroke-width="1.300" d="M2.500 10.500h-1v-9h7v1M4.500 4h5l3 3v6h-8zM9 4v3.500h3.500"/></svg>
                    <span class="push"></span>
                    <div class="page">62</div>
                    <div class="total">123</div>
                    <svg class="sm" viewBox="0 0 14 14"><path fill="none" stroke="#222" stroke-width="2.200" d="M3 9l4-4 4 4"/></svg>
                    <svg class="sm" viewBox="0 0 14 14"><path fill="none" stroke="#222" stroke-width="2.200" d="M3 5l4 4 4-4"/></svg>
                    <svg class="low" viewBox="0 0 14 14"><path fill="none" stroke="#222" stroke-width="1.500" d="M11.500 4A5 5 0 1 0 12 8.500M12.500 1v4h-4"/></svg>
                    <svg class="low" viewBox="0 0 14 14"><path fill="none" stroke="#222" stroke-width="1.400" d="M12 8V4L9.500 1.500H2v11h7M4.500 7v3h3M6.500 6.500l2-2M9.500 7V4H7"/><path fill="#222" d="M14 10v4h-4z"/></svg>
                    <svg class="low" viewBox="0 0 14 14"><circle cx="6" cy="6" r="4.500" fill="none" stroke="#222" stroke-width="1.300"/><path stroke="#222" stroke-width="1.300" d="M9 9l4.500 4.500M4 6h4M6 4v4"/></svg>
                    <svg class="low" viewBox="0 0 14 14"><circle cx="6" cy="6" r="4.500" fill="none" stroke="#222" stroke-width="1.300"/><path stroke="#222" stroke-width="1.300" d="M9 9l4.500 4.500M4 6h4"/></svg>
                </div>
            </div>
        </section>

        <!-- floating toolbars -->
        <div class="palette p-sketch">
            <div class="ptitle"><span>Sketch-Based Features</span><b>x</b></div>
            <div class="picons">
                <div class="pi more"><svg><use href="#pad"/></svg></div>
                <div class="pi more"><svg><use href="#pocket"/></svg></div>
                <div class="pi"><svg><use href="#shaft"/></svg></div>
                <div class="pi"><svg><use href="#groove"/></svg></div>
                <div class="pi"><svg><use href="#hole"/></svg></div>
                <div class="pi"><svg><use href="#rib"/></svg></div>
                <div class="pi"><svg><use href="#slot"/></svg></div>
                <div class="pi more"><svg><use href="#stiff"/></svg></div>
                <div class="pi"><svg><use href="#loft"/></svg></div>
                <div class="pi"><svg><use href="#loft2"/></svg></div>
            </div>
        </div>
        <div class="palette p-trans">
            <div class="ptitle"><span>Transformation Feat...</span><b>x</b></div>
            <div class="picons">
                <div class="pi more"><svg><use href="#trans"/></svg></div>
                <div class="pi line"><svg><use href="#mirror"/></svg></div>
                <div class="pi more"><svg><use href="#pattern"/></svg></div>
                <div class="pi line end more"><svg><use href="#scale"/></svg></div>
            </div>
        </div>
        <div class="palette p-dress">
            <div class="ptitle"><span>Dress-Up Features</span><b>x</b></div>
            <div class="picons">
                <div class="pi more"><svg><use href="#fillet"/></svg></div>
                <div class="pi"><svg><use href="#chamfer"/></svg></div>
                <div class="pi more"><svg><use href="#draft"/></svg></div>
                <div class="pi"><svg><use href="#shell"/></svg></div>
                <div class="pi"><svg><use href="#thick"/></svg></div>
                <div class="pi"><svg><use href="#thread"/></svg></div>
                <div class="pi more"><svg><use href="#remove"/></svg></div>
            </div>
        </div>
        <div class="palette p-s">
            <div class="ptitle"><span>S</span><b>x</b></div>
            <div class="picons"><div class="pi more"><svg><use href="#sketcher"/></svg></div></div>
        </div>

        <div class="watermark">Learn Engineering Tutorials</div>
    </main>

    <footer class="taskbar">
        <div class="tb-start"><svg viewBox="0 0 12 12"><path fill="#fff" d="M0 1.500L5.500 1v4.700H0zM6.200.9L12 0v5.700H6.200zM0 6.300h5.500V11L0 10.500zM6.200 6.300H12V12l-5.800-.9z"/></svg></div>
        <div class="tb-search">
            <svg class="lens" viewBox="0 0 12 12"><circle cx="7" cy="4.500" r="3.700" fill="none" stroke="#222"/><path stroke="#222" d="M4.300 7.200L.5 11.500"/></svg>
            <span>Type here to search</span>
            <svg class="spark" viewBox="0 0 42 20"><path fill="#f8bf22" d="M17 1q1.500 8 8 8.500-6.500 1.500-8 8.500-1.500-7-8-8.500 6.500-.5 8-8.500zM32 9q.5 3 4 3.500-3.500.5-4 3.500-.5-3-4-3.500 3.500-.5 4-3.500z"/><path fill="#1f9bd8" d="M4.500 12l1 2 2.500.5-2 1.500v2.500l-2-1.500-2.500.5 1-2-1-2 2 .5z"/><circle cx="28" cy="3.500" r="1.500" fill="#d9534f"/><circle cx="40" cy="16" r="1.200" fill="#8bb36a"/></svg>
        </div>
        <div class="tb-item"><svg viewBox="0 0 16 16"><path fill="none" stroke="#eee" stroke-width="1.200" d="M3 3V1M9 3V1M2.500 5.500h7v5h-7zM3 13v2M9 13v2M3 3h6M3 13h6M13 1v14"/><path fill="#eee" d="M12 6h3v3h-3z"/></svg></div>
        <div class="tb-item"><svg viewBox="0 0 16 16"><path fill="url(#cop)" d="M5 1h5q2 0 2 3h1q3 0 2 3l-2 6q-1 2-3 2H6q-2 0-2-3H3q-3 0-2-3l2-6q1-2 2-2z"/><path fill="#1d2220" d="M7.500 5.500h2L8.500 10h-2z"/></svg></div>
        <div class="tb-item open"><svg viewBox="0 0 16 16"><path fill="#e8a82a" d="M1 2h5l2 2h7v10H1z"/><path fill="#fbd866" d="M1 5h14v9H1z"/><path fill="#3a8fd8" d="M4 15V9h8v6h-2.500v-3h-3v3z"/></svg></div>
        <div class="tb-item"><svg viewBox="0 0 16 16"><path fill="none" stroke="#3fb4e8" stroke-width="1.300" d="M5 5V1.500h6V5"/><path fill="#f6f6f6" d="M1 4h14v11H1z"/><path fill="#f25022" d="M5 6h2.700v2.700H5z"/><path fill="#7fba00" d="M8.300 6H11v2.700H8.300z"/><path fill="#00a4ef" d="M5 9.300h2.700V12H5z"/><path fill="#ffb900" d="M8.300 9.300H11V12H8.300z"/></svg></div>
        <div class="tb-item"><svg viewBox="0 0 16 16"><path fill="#1769b4" d="M0 6l8-5 8 5v9H0z"/><path fill="#e9f6ff" d="M2 6h12L8 11z"/><path fill="#36a6ea" d="M0 6.500L8 11l8-4.500V15H0z"/></svg></div>
        <div class="tb-item"><svg viewBox="0 0 16 16"><path fill="#fff" d="M0 16l1-5A7.500 7.500 0 1 1 5 15z"/><circle cx="8.200" cy="8" r="6.500" fill="#2bc65a"/><path fill="#fff" d="M5.500 4.500l1.500 0 1 2-1 1q1 2 2.500 2.500l1-1 2 1-.5 1.500q-2 1.500-5-1T5.500 4.500z"/></svg></div>
        <div class="tb-item"><svg viewBox="0 0 16 16"><path fill="#f0eeee" d="M0 0h16v16H0z"/><path fill="none" stroke="#a8182c" stroke-width="2.600" d="M3.500 13L7.500 3h1l4 10M5.500 10h6"/></svg></div>
        <div class="tb-item"><svg viewBox="0 0 16 16"><ellipse cx="7" cy="6" rx="7" ry="4.500" fill="#ece2e4" stroke="#b0505a" transform="rotate(-20 7 6)"/><path stroke="#b8b0b4" d="M5 6l7 5M9 4l1 7"/><circle cx="10" cy="13" r="1.800" fill="none" stroke="#3a9be0" stroke-width="1.300"/><circle cx="14" cy="11.500" r="1.500" fill="none" stroke="#3a9be0" stroke-width="1.300"/></svg></div>
        <div class="tb-item"><svg viewBox="0 0 16 16"><path fill="#6cc4ec" d="M0 3h16v11H0z"/><path fill="#c4ebfa" d="M2 5h12v7H2z"/><circle cx="5" cy="8" r="2" fill="#2a86c8"/><path stroke="#2a86c8" d="M9 7h4M9 9.500h4M3 11h4"/></svg></div>
        <div class="tb-item"><svg viewBox="0 0 16 16"><use href="#chrome"/></svg></div>
        <div class="tb-item open"><svg viewBox="0 0 16 16"><use href="#chrome"/><circle cx="12" cy="11.500" r="4" fill="#1b2430"/><path stroke="#ccd" d="M10 11.500h4"/></svg></div>
        <div class="tb-item open active"><svg viewBox="0 0 16 16"><use href="#catia"/></svg></div>
        <div class="tb-item open"><svg viewBox="0 0 16 16"><path fill="#b30b00" d="M1 1h14v14H1z"/><path fill="none" stroke="#fff" stroke-width="1.300" d="M8 4v3.500L4 12M8 7.500q1 2 5 2.500M5.500 10l5-1"/></svg></div>
        <div class="tray">
            <svg class="sun" viewBox="0 0 16 16"><circle cx="7" cy="9" r="6.500" fill="#f6a21c"/><circle cx="12" cy="4" r="4" fill="#c42b2b"/><path stroke="#fff" fill="none" stroke-width=".9" d="M13.300 2.200h-2.500v1.600q2.500-.4 2.300 1.100T10.700 5.800"/></svg>
            <span class="weather">25°C&nbsp;&nbsp;Sunny</span>
            <svg class="t1" viewBox="0 0 12 12"><path d="M2 8l4-4 4 4"/></svg>
            <svg class="t1" viewBox="0 0 12 12"><path d="M4 2.500h7.500v5.500H4M1 1v4M0 3h3M1.500 5v4h4M7 8v2.500M5 10.500h4"/></svg>
            <svg class="t1" viewBox="0 0 12 12"><path d="M2.500 4h5v5h-5zM7.500 6l2-1.500v4l-2-1.500M3 1.500h6M3 11h6"/></svg>
            <svg class="t1" viewBox="0 0 12 12"><path d="M1 4.500h2L5.500 2v8L3 7.500H1zM7 4.500q1 1.500 0 3M8.500 3q2 3 0 6M10.300 2q2.500 4 0 8"/></svg>
            <span class="lang">ENG</span>
            <div class="clock"><span>15:37</span><span>07-02-2026</span></div>
            <svg class="note" viewBox="0 0 16 16"><path fill="#f2f2f2" d="M1 1h11v8H6l-3 3V9H1z"/><path stroke="#333" d="M3 3.500h7M3 6h7"/><circle cx="11" cy="11.500" r="4.300" fill="#444" stroke="#bbb" stroke-width=".6"/><path stroke="#fff" fill="none" d="M9.700 9.500h2.500L11 11.200q1.700.2 1.300 1.300-.6 1.400-2.600.6"/></svg>
            <i class="peek"></i>
        </div>
    </footer>
</body>
</html>
```

FILE: styles.css
```css
* {
    box-sizing: border-box;
}
body {
    margin: 0;
    width: 1280px;
    height: 720px;
    overflow: hidden;
    display: flex;
    flex-direction: column;
    font-family: "Noto Sans", "Open Sans", sans-serif;
    font-size: 8px;
    color: #1c1c24;
}
.defs {
    position: absolute;
}
.desktop {
    position: relative;
    display: flex;
    height: 693px;
}
svg {
    display: block;
}

/* CATIA window */
.catia {
    width: 640px;
    height: 693px;
    display: flex;
    flex-direction: column;
    background: #d3d2ee;
    border-right: 1px solid #55555f;
    box-shadow: 1px 0 6px rgba(0, 0, 0, 0.35);
    z-index: 1;
}
.titlebar {
    height: 16px;
    background: #fff;
    display: flex;
    align-items: flex-start;
    padding-left: 6px;
}
.app {
    width: 9px;
    height: 9px;
}
.title {
    margin-left: 4px;
    font-size: 7.900px;
    line-height: 10px;
    letter-spacing: -0.050px;
    flex: 1;
}
.winbtns {
    width: 80px;
    height: 12px;
    fill: none;
    stroke: #222;
    margin-right: 3px;
}
.menubar {
    height: 12px;
    display: flex;
    background: #d0cff0;
}
.menuicon {
    width: 12px;
    height: 12px;
    margin: 0 4px 0 1px;
}
.menu {
    flex: 1;
    display: grid;
    grid-template-columns: 34px 66px 28px 30px 32px 36px 34px 46px 40px;
    line-height: 12px;
    font-size: 7.500px;
}
.menu .start {
    background: #f6e4bf;
    width: 28px;
    padding-left: 1px;
}
.vpm {
    letter-spacing: 0.100px;
}
.mdi {
    width: 38px;
    height: 12px;
    background: #f4f4fc;
    fill: none;
    stroke: #555;
}
.props {
    height: 25px;
    display: flex;
    align-items: center;
    padding: 1px 0 0 12px;
    gap: 2px;
    background: linear-gradient(#fff 0, #fff 2px, #d9d8f4 4px, #d0cfee 70%, #8f8fa8 100%);
}
.combo {
    height: 16px;
    display: flex;
    align-items: center;
    justify-content: space-between;
    background: #fff;
    border: 1px solid #b8b8c8;
    padding: 0 3px 1px 2px;
    font-size: 8px;
}
.combo b {
    width: 4px;
    height: 4px;
    margin-top: -2px;
    border: solid #555;
    border-width: 0 1px 1px 0;
    transform: rotate(45deg);
}
.combo.off {
    background: #f2f2f8;
    border-color: #d8d8e4;
}
.combo.off b {
    border-color: #b8b8c4;
}
.combo.grey {
    background: #dddde6;
}
.w42 { width: 42px; }
.w43 { width: 43px; }
.w29 { width: 29px; }
.w28 { width: 28px; }
.swatch {
    width: 23px;
    height: 12px;
    margin: 1px 0 0 1px;
    background: #12fff0;
    border: 1px solid #aaa;
}
.rule {
    width: 25px;
    height: 1px;
    margin-left: 1px;
    background: #333;
}
.brush {
    width: 15px;
    height: 14px;
    margin-left: -1px;
}
.ball {
    margin-left: 2px;
}

.work {
    height: 602px;
    display: flex;
}
.viewport {
    position: relative;
    width: 615px;
    overflow: hidden;
    background: linear-gradient(#33315f 0, #373463 25%, #444170 52%, #56537c 70%, #8d8ca3 88%, #a9a8bb 100%);
}
.scene {
    position: absolute;
    left: 0;
    top: 0;
    width: 615px;
    height: 602px;
}
.axis text {
    font-size: 8.500px;
    font-weight: bold;
    fill: #c4c46a;
}
.triad text {
    font-size: 9px;
    fill: #f2f2fa;
}
.tree {
    position: relative;
    margin: 0;
    padding: 8px 0 0;
    list-style: none;
    color: #f4f4fa;
    font-size: 12.300px;
    line-height: 19px;
}
.tree li {
    height: 26.100px;
    display: flex;
    align-items: center;
}
.tree span {
    padding: 0 1px 0 0;
    margin-left: 2px;
    white-space: nowrap;
}
.root { padding-left: 3px; }
.l1 { padding-left: 21px; }
.l2 { padding-left: 40px; }
.l3 { padding-left: 58px; }
.i22 {
    width: 22px;
    height: 22px;
    margin-top: -5px;
}
.i20 {
    width: 20px;
    height: 19px;
    margin: -4px 2px 0 0;
}
.l2 .i20 {
    margin-right: 1px;
}
.tree .hot {
    background: #f08008;
    text-decoration: underline;
}
.tree .bg {
    background: #312f5c;
}
.tree .ul {
    text-decoration: underline;
}

.vbar {
    flex: 1;
    padding-top: 41px;
    background: linear-gradient(90deg, #fff 0, #fff 3px, #d6d5f0 5px, #d6d5f0 70%, #bab9d2 100%);
}
.vi {
    position: relative;
    height: 18.700px;
    display: flex;
    align-items: center;
    justify-content: center;
    padding-left: 2px;
}
.vi.tall {
    height: 20.600px;
}
.vi svg {
    width: 15px;
    height: 15px;
}
.vbar hr {
    width: 10px;
    height: 0;
    margin: 4px 0 4px 4px;
    border: 0;
    border-top: 1px solid #a8a8bc;
    border-bottom: 1px solid #fff;
    box-sizing: content-box;
    background: none;
}
.abc {
    font-size: 6.500px;
    text-decoration: underline;
}
.more::after {
    content: "";
    position: absolute;
    right: 1px;
    bottom: 0;
    border: 2.500px solid transparent;
    border-top: 3px solid #111;
    border-bottom: 0;
}

.hbar {
    height: 23px;
    display: flex;
    align-items: center;
    padding-bottom: 1px;
    background: linear-gradient(#fff 0, #fff 2px, #d6d5f0 4px, #cfceea 75%, #a3a2bc 100%);
}
.grip {
    width: 1px;
    height: 12px;
    margin: -6px 4.500px 0 4px;
    background: #f8f8ff;
    border-right: 1px solid #b0b0c4;
    box-sizing: content-box;
}
.grip.first {
    margin: -6px 4px 0 3px;
}
.grip.mid {
    margin: -6px 6px 0 6px;
}
.grip.wide {
    margin: -6px 5px 0 7px;
}
.grip.last {
    margin-left: 6px;
}
.hi {
    position: relative;
    width: 18.500px;
    height: 20px;
    display: flex;
    align-items: center;
    justify-content: center;
}
.hi.wide {
    width: 19.900px;
}
.hi svg {
    width: 14px;
    height: 14px;
}
.fx {
    font: italic bold 12px "Liberation Serif", serif;
}
.fx small {
    font-size: 8px;
}
.chev {
    margin: -8px 0 0 4px;
    color: #9a9aac;
}
.ds {
    margin: -3px 0 0 7px;
    width: 28px;
    text-align: center;
}
.ds svg {
    width: 28px;
    height: 15px;
}
.ds em {
    display: block;
    font-size: 6.500px;
    line-height: 6px;
    font-weight: bold;
    color: #33305a;
}
.status {
    height: 15px;
    display: flex;
    align-items: center;
    padding: 0 0 1px 2px;
    font-size: 7.400px;
}
.status span {
    width: 393px;
}
.cmd {
    width: 200px;
    height: 13px;
    background: #fff;
    border: 1px solid #aaa;
}
.sbtn {
    width: 21px;
    height: 13px;
    margin-right: 2px;
    display: flex;
    align-items: center;
    justify-content: center;
    border: 1px solid #b0b0c2;
    background: #dcdcea;
}
.sbtn svg {
    width: 12px;
    height: 8px;
}

/* Acrobat window */
.acrobat {
    width: 640px;
    display: flex;
    flex-direction: column;
    background: #fff;
}
.atitle {
    height: 23px;
    background: #e0e3ec;
    display: flex;
    align-items: center;
    padding: 1px 8px 0 419px;
}
.a12 {
    width: 12px;
    height: 12px;
}
.a14 {
    width: 14px;
    height: 14px;
}
.bell {
    margin: 0 9px 0 10px;
}
.signin {
    margin-left: 14px;
    font-size: 10.600px;
    flex: 1;
    font-weight: 700;
    white-space: nowrap;
}
.awin {
    width: 78px;
    height: 12px;
    fill: none;
    stroke: #222;
    stroke-width: 1.2;
}
.atools {
    height: 32px;
    display: flex;
    align-items: center;
    padding-left: 269px;
    border-bottom: 1px solid #d8d8e0;
}
.find {
    font-size: 7.800px;
    width: 66px;
    white-space: nowrap;
}
.phones {
    margin-left: 17px;
}
.vline {
    width: 1px;
    height: 10px;
    margin-left: 9px;
    background: #ccc;
}
.disk {
    margin-left: 11px;
}
.up {
    margin: 0 14px 0 15px;
}
.share {
    margin-left: 5px;
    width: 44px;
    height: 22px;
    border-radius: 11px;
    background: #1d1d1d;
    color: #fff;
    font-size: 8px;
    font-weight: bold;
    line-height: 21px;
    text-align: center;
}
.ask {
    margin-left: 6px;
    width: 96px;
    height: 22px;
    border-radius: 11px;
    background: linear-gradient(90deg, #f0505c, #b858a8 50%, #6a62f6 85%);
    color: #fff;
    font-size: 7.700px;
    font-weight: bold;
    display: flex;
    align-items: center;
    gap: 4px;
    padding-left: 8px;
    white-space: nowrap;
}
.ask svg {
    width: 13px;
    height: 13px;
}
.abody {
    height: 638px;
    display: flex;
}
.heading text {
    font: 55px "Liberation Sans", Arial, sans-serif;
    fill: #fff;
    text-shadow: 2px 2px 0 #000;
}
.pageno {
    font: 17px "Liberation Serif", serif;
    fill: #e8e8f4;
}
.pane {
    flex: 1;
    background: #f5f5fd;
}
.scroll {
    width: 12px;
    height: 638px;
    display: flex;
    flex-direction: column;
    align-items: center;
    background: #f1f1f6;
    border-right: 1px solid #dcdce2;
    padding: 6px 0 4px;
}
.sup,
.sdn {
    width: 4px;
    height: 4px;
    border: solid #444;
    border-width: 1px 0 0 1px;
    transform: rotate(45deg);
}
.sdn {
    transform: rotate(225deg);
    margin-top: auto;
}
.thumb {
    width: 9px;
    height: 11px;
    margin-top: 301px;
    background: #c3c3c8;
}
.rail {
    width: 31px;
    display: flex;
    flex-direction: column;
    align-items: center;
}
.rail svg {
    width: 13px;
    height: 13px;
    margin-bottom: 13px;
}
.rail .r1 {
    margin: 10px 0 8px;
}
.rail hr {
    width: 16px;
    height: 1px;
    margin: 0 0 8px;
    border: 0;
    background: #ddd;
}
.push {
    flex: 1;
}
.page {
    width: 21px;
    height: 21px;
    border: 1px solid #b8b8be;
    border-radius: 2px;
    line-height: 19px;
    text-align: center;
    font-size: 8px;
}
.total {
    margin: 7px 0 13px;
    line-height: 12px;
    font-size: 8px;
}
.rail .sm {
    width: 9px;
    height: 9px;
    margin-bottom: 14px;
}
.rail .low {
    width: 12px;
    height: 12px;
    margin-bottom: 12px;
}
.rail .low:last-child {
    margin-bottom: 5px;
}

/* floating toolbars */
.palette {
    position: absolute;
    z-index: 2;
    background: #fff;
    border: 1px solid #a5a5b5;
    box-shadow: 0 1px 6px rgba(0, 0, 0, 0.35);
}
.p-sketch { left: 350px; top: 43px; width: 201px; height: 45px; }
.p-trans { left: 597px; top: 45px; width: 99px; height: 44px; }
.p-dress { left: 739px; top: 47px; width: 144px; height: 44px; }
.p-s { left: 979px; top: 44px; width: 24px; height: 48px; }
.ptitle {
    height: 21px;
    display: flex;
    align-items: center;
    justify-content: space-between;
    padding-left: 4px;
    font-size: 7.500px;
    white-space: nowrap;
}
.ptitle span {
    margin-top: -3px;
}
.p-trans .ptitle {
    font-size: 7.400px;
}
.p-dress .ptitle {
    font-size: 7.400px;
}
.ptitle b {
    width: 12px;
    height: 12px;
    background: #b84450;
    color: #fff;
    font-size: 7px;
    line-height: 11px;
    text-align: center;
}
.picons {
    height: 22px;
    display: flex;
    align-items: center;
    padding-left: 8px;
    background: linear-gradient(#f0f0fc, #d4d3ee 30%, #c9c8e2);
}
.p-trans .picons {
    padding-left: 7px;
}
.pi {
    position: relative;
    width: 19.100px;
    height: 20px;
    display: flex;
    align-items: center;
    justify-content: center;
}
.pi svg {
    width: 14px;
    height: 14px;
}
.p-trans .pi {
    width: 20px;
}
.p-trans .pi.line {
    width: 23px;
    padding-left: 2px;
    border-left: 1px solid #f2f2fc;
}
.p-trans .pi.end {
    width: 27px;
}
.p-s .ptitle {
    height: 20px;
    padding-left: 4px;
}
.p-s .picons {
    height: 26px;
    padding: 6px 0 0 1px;
}

.watermark {
    position: absolute;
    z-index: 3;
    left: 991px;
    top: 621px;
    font: 20px/24px "Liberation Sans", Arial, sans-serif;
    color: #d0061c;
    white-space: nowrap;
}

/* taskbar */
.taskbar {
    height: 27px;
    display: flex;
    background: #232523;
    color: #f0f0f0;
}
.tb-start {
    width: 32px;
    display: flex;
    align-items: center;
    justify-content: center;
}
.tb-start svg {
    width: 12px;
    height: 12px;
}
.tb-search {
    width: 192px;
    height: 27px;
    display: flex;
    align-items: center;
    background: #f3f3fb;
    color: #444;
    font-size: 9.300px;
    padding-left: 8px;
}
.lens {
    width: 11px;
    height: 11px;
    margin-right: 8px;
}
.tb-search span {
    flex: 1;
}
.spark {
    width: 42px;
    height: 20px;
    margin-right: 6px;
}
.tb-item {
    width: 32.700px;
    display: flex;
    align-items: center;
    justify-content: center;
    border-bottom: 1px solid transparent;
}
.tb-item svg {
    width: 15px;
    height: 15px;
}
.tb-item.open {
    border-bottom-color: #f0d8c0;
}
.tb-item.active {
    background: #565656;
}
.tray {
    flex: 1;
    display: flex;
    align-items: center;
    padding-left: 377px;
    font-size: 8.300px;
}
.sun {
    width: 16px;
    height: 16px;
}
.weather {
    width: 65px;
    margin-left: 5px;
    font-size: 8.600px;
    white-space: nowrap;
}
.t1 {
    width: 12px;
    height: 12px;
    margin-right: 4px;
    fill: none;
    stroke: #e8e8e8;
}
.clock {
    width: 53px;
    display: flex;
    flex-direction: column;
    text-align: center;
    line-height: 12px;
    font-size: 7.500px;
}
.note {
    width: 16px;
    height: 16px;
    margin-left: 4px;
}
.peek {
    width: 1px;
    height: 27px;
    margin-left: 9px;
    background: #555;
}
```
